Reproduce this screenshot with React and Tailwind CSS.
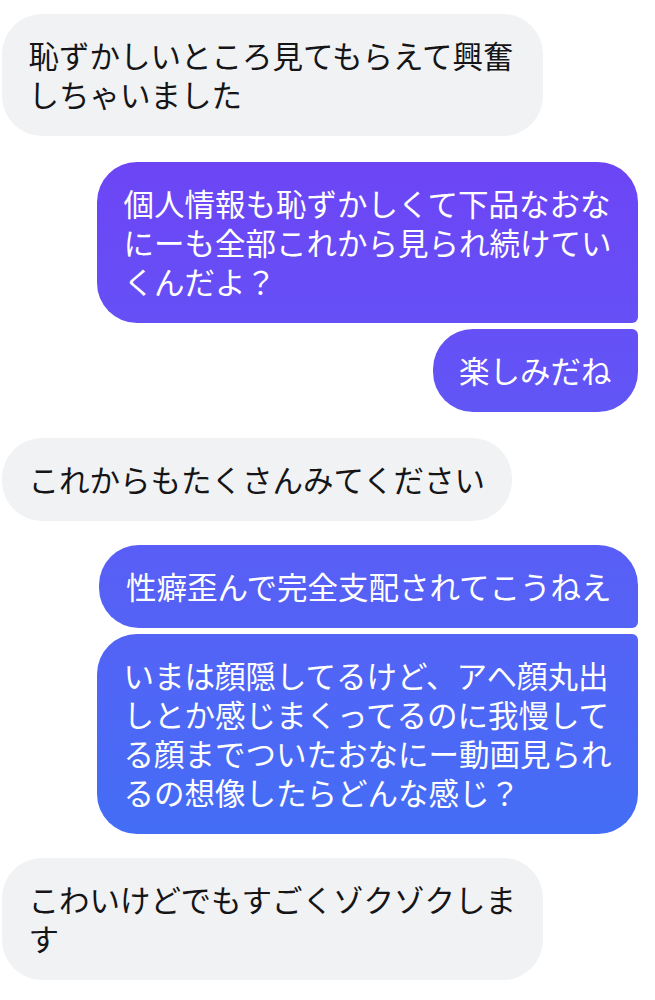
// Chat thread — two-sided message bubbles
const font = { fontFamily: '"Noto Sans CJK JP", "Noto Sans", sans-serif' }

const messages = [
  { side: 'left', text: '恥ずかしいところ見てもらえて興奮しちゃいました', shape: 'rounded-[40px]', gap: '' },
  { side: 'right', text: '個人情報も恥ずかしくて下品なおなにーも全部これから見られ続けていくんだよ？', shape: 'rounded-[40px] rounded-br-[6px]', gap: 'mt-[26px]' },
  { side: 'right', text: '楽しみだね', shape: 'rounded-[40px] rounded-tr-[6px]', gap: 'mt-[6px]' },
  { side: 'left', text: 'これからもたくさんみてください', shape: 'rounded-[40px]', gap: 'mt-[26px]' },
  { side: 'right', text: '性癖歪んで完全支配されてこうねえ', shape: 'rounded-[40px] rounded-br-[6px]', gap: 'mt-[24px]' },
  { side: 'right', text: 'いまは顔隠してるけど、アヘ顔丸出しとか感じまくってるのに我慢してる顔までついたおなにー動画見られるの想像したらどんな感じ？', shape: 'rounded-[40px] rounded-tr-[6px]', gap: 'mt-[6px]' },
  { side: 'left', text: 'こわいけどでもすごくゾクゾクします', shape: 'rounded-[40px]', gap: 'mt-[24px]' },
]

function Bubble({ side, text, shape }) {
  if (side === 'left') {
    return (
      <div className={`max-w-[541px] self-start bg-[#f1f2f4] text-[#151517] px-[26.5px] py-[22px] text-[30.5px] leading-[39px] ${shape}`}>
        {text}
      </div>
    )
  }
  return (
    <div className={`max-w-[541px] self-end bg-fixed bg-linear-to-b from-[#7337f5] to-[#3076f6] text-white px-[26.5px] py-[22px] text-[30.5px] leading-[39px] ${shape}`}>
      {text}
    </div>
  )
}

export default function App() {
  return (
    <div className="w-[655px] h-[1000px] bg-white overflow-hidden pt-[14px] pl-[2px] pr-[17px] flex flex-col" style={font}>
      {messages.map((m, i) => (
        <div key={i} className={`flex flex-col ${m.gap}`}>
          <Bubble {...m} />
        </div>
      ))}
    </div>
  )
}
